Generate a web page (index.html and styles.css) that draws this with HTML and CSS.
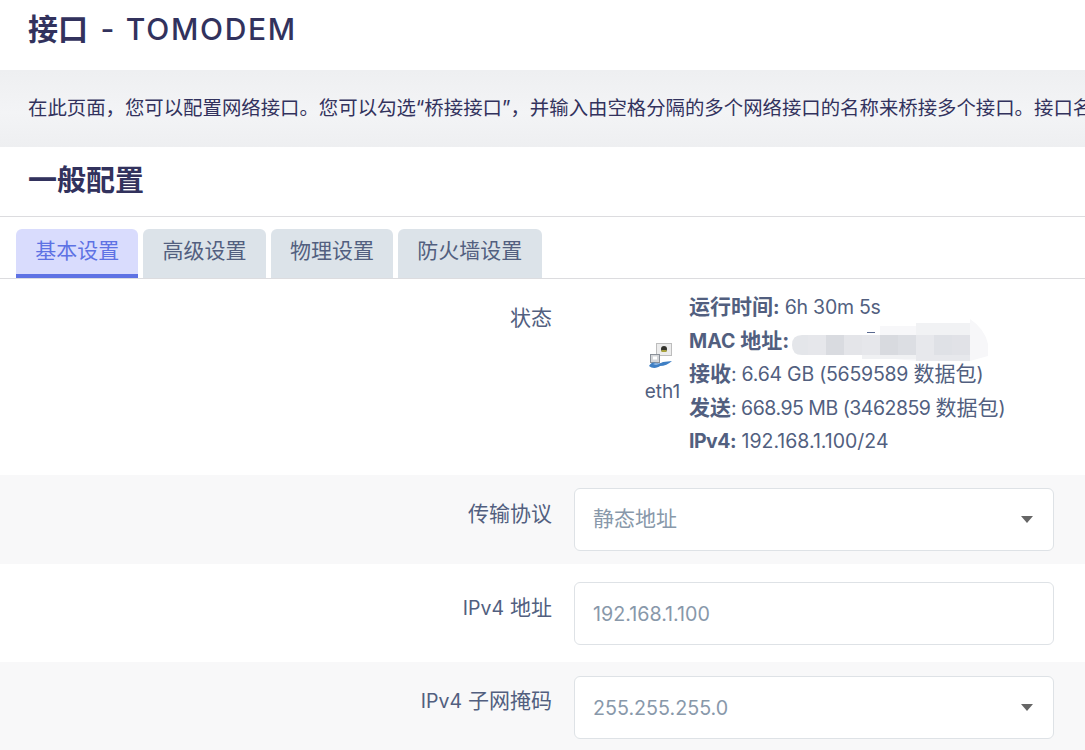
FILE: index.html
```html
<!DOCTYPE html>
<html lang="zh-CN">
<head>
    <meta charset="UTF-8">
    <meta name="viewport" content="width=device-width, initial-scale=1.0">
    <title>接口 - TOMODEM</title>
    <link rel="stylesheet" href="styles.css">
</head>
<body>
    <h1 class="page-title">接口 <span class="title-latin">- TOMODEM</span></h1>
    <div class="page-desc">在此页面，您可以配置网络接口。您可以勾选“桥接接口”，并输入由空格分隔的多个网络接口的名称来桥接多个接口。接口名称中可以使用 VLAN 表示法。</div>

    <main class="section">
        <h2 class="section-title">一般配置</h2>
        <ul class="tabs">
            <li class="tab active">基本设置</li>
            <li class="tab">高级设置</li>
            <li class="tab">物理设置</li>
            <li class="tab">防火墙设置</li>
        </ul>

        <div class="row row-status">
            <div class="row-label">状态</div>
            <div class="status">
                <div class="status-icon">
                    <svg width="26" height="28" viewBox="0 0 26 28">
                        <rect x="8.5" y="1.5" width="15" height="12" fill="#ececec" stroke="#bdbdbd"/>
                        <circle cx="16" cy="7" r="3" fill="#33332c"/>
                        <rect x="13.5" y="8" width="5" height="2" fill="#a9a23c"/>
                        <rect x="2.5" y="12.5" width="9" height="8" fill="#d4d6d9" stroke="#8b9199"/>
                        <rect x="5" y="14.5" width="4" height="3" fill="#fff"/>
                        <path d="M1 24c2-4 5-4 8-3 2 1 4 0 6-1l9-1c-3 3-8 5-12 5-2 2-8 3-11 0z" fill="#3f7fc4"/>
                        <path d="M5 22c2-1 4-1 6 0-2 1-4 1-6 0z" fill="#a9c8ea"/>
                    </svg>
                    <span>eth1</span>
                </div>
                <div class="status-info">
                    <div class="status-line"><strong>运行时间<span class="lat">:</span></strong><span class="lat tight"> 6h 30m 5s</span></div>
                    <div class="status-line mac-line"><strong><span class="lat">MAC</span> 地址:</strong>
                        <svg class="mac-blur" width="210" height="50" viewBox="0 0 210 50">
                            <path d="M95 21 95 12 131 12 131 9 185 9 185 5Q200 15 203 30L203 42 185 47 131 47 77 42Z" fill="#f7f7f9"/>
                            <rect x="131" y="9" width="54" height="12" fill="#f1f2f4"/>
                            <rect x="77" y="40" width="54" height="5" fill="#f0f1f3"/>
                            <rect x="131" y="40" width="54" height="7" fill="#e7e8ec"/>
                            <path d="M23 21H17Q7 21 7 31T17 41H23Z" fill="#e4e6ea"/>
                            <rect x="23" y="21" width="18" height="20" fill="#e6e7eb"/>
                            <rect x="41" y="21" width="18" height="20" fill="#d9dbe0"/>
                            <rect x="59" y="21" width="18" height="20" fill="#e4e5e9"/>
                            <rect x="77" y="21" width="18" height="20" fill="#e6e7eb"/>
                            <rect x="95" y="21" width="18" height="20" fill="#d8dadf"/>
                            <rect x="113" y="21" width="18" height="20" fill="#dcdee3"/>
                            <rect x="131" y="21" width="18" height="20" fill="#e7e8ec"/>
                            <rect x="149" y="21" width="18" height="20" fill="#dfe1e6"/>
                            <rect x="167" y="21" width="18" height="20" fill="#e1e2e7"/>
                            <rect x="82" y="18" width="8" height="1" fill="#5a6a90"/>
                        </svg>
                    </div>
                    <div class="status-line"><strong>接收</strong><span class="lat tight">: 6.64 GB (5659589 </span>数据包<span class="lat">)</span></div>
                    <div class="status-line"><strong>发送</strong><span class="lat tighter">: 668.95 MB (3462859 </span>数据包<span class="lat">)</span></div>
                    <div class="status-line"><strong class="lat tighter">IPv4:</strong><span class="lat"> 192.168.1.100/24</span></div>
                </div>
            </div>
        </div>

        <div class="row row-alt">
            <div class="row-label">传输协议</div>
            <div class="field select">静态地址</div>
        </div>
        <div class="row">
            <div class="row-label"><span class="lat">IPv4</span> 地址</div>
            <div class="field field-lat"><span class="lat">192.168.1.100</span></div>
        </div>
        <div class="row row-alt row-last">
            <div class="row-label"><span class="lat">IPv4</span> 子网掩码</div>
            <div class="field field-lat select"><span class="lat">255.255.255.0</span></div>
        </div>
    </main>
</body>
</html>
```

FILE: styles.css
```css
html, body {
    height: 100%;
    overflow: hidden;
}
body {
    margin: 0;
    background: #fff;
    color: #525f7f;
    font-family: "Inter", "Noto Sans CJK SC", sans-serif;
    font-size: 21px;
    line-height: 1.6;
}
/* latin text runs narrower than the cjk text beside it */
.lat {
    font-size: 19.5px;
}
.tight {
    letter-spacing: -0.25px;
}
.tighter {
    letter-spacing: -0.5px;
}
.page-title {
    margin: 0;
    height: 70px;
    padding: 5px 28px 0;
    box-sizing: border-box;
    color: #32325d;
    font-size: 30px;
    line-height: 48px;
    font-weight: 600;
}
.title-latin {
    margin-left: 5px;
    font-weight: 500;
    letter-spacing: 1.7px;
}
.page-desc {
    height: 77px;
    padding: 0 28px;
    box-sizing: border-box;
    background: linear-gradient(#eeeff1, #f3f4f6 55%, #eeeff1);
    color: #32325d;
    font-size: 19.4px;
    line-height: 77px;
    white-space: nowrap;
    overflow: hidden;
}
.section-title {
    margin: 0;
    height: 70px;
    padding: 0 28px;
    box-sizing: border-box;
    border-bottom: 1px solid #dcdcdf;
    color: #32325d;
    font-size: 29px;
    line-height: 68px;
    font-weight: 700;
}
.tabs {
    display: flex;
    gap: 5px;
    list-style: none;
    margin: 0;
    padding: 12px 16px 0;
    border-bottom: 1px solid #dcdcdf;
}
.tab {
    height: 49px;
    box-sizing: border-box;
    padding: 0 19.2px;
    border-radius: 6px 6px 0 0;
    background: #dce3e9;
    line-height: 44px;
    color: #525f7f;
}
.tab.active {
    background: #d9dcfd;
    color: #5e72e4;
    border-bottom: 4px solid #5e72e4;
}
.row {
    display: flex;
    padding: 18px 31px 17px 0;
}
.row-alt {
    background: #f8f8f9;
    padding: 13px 31px 13px 0;
}
.row-last {
    padding-top: 14px;
}
.row-label {
    width: 552px;
    flex: none;
    text-align: right;
    line-height: 52px;
}
.row-last .row-label {
    line-height: 50px;
}
.field {
    position: relative;
    flex: 1;
    height: 63px;
    margin-left: 22px;
    padding: 0 18px;
    box-sizing: border-box;
    border: 1px solid #dee2e6;
    border-radius: 6px;
    background: #fff;
    color: #8898aa;
    line-height: 60px;
}
.field-lat {
    line-height: 61px;
}
.field-lat .lat {
    font-size: 19.7px;
}
.select::after {
    content: "";
    position: absolute;
    right: 20px;
    top: 27px;
    border-style: solid;
    border-width: 7px 6px 0;
    border-color: #666 transparent transparent;
}
.row-status {
    padding: 11px 0 17.5px;
}
.row-status .row-label {
    line-height: 56px;
}
.status {
    display: flex;
    align-items: center;
    margin-left: 88px;
}
.status-icon {
    display: flex;
    flex-direction: column;
    align-items: center;
    width: 45px;
    padding-right: 4px;
    font-size: 19px;
    line-height: 28px;
}
.status-icon svg {
    margin: 0 4px 8px 0;
    filter: blur(0.4px);
}
.status-line {
    height: 33.5px;
    line-height: 33.5px;
    white-space: pre;
}
.status-info strong {
    font-weight: 700;
}
.mac-line {
    position: relative;
}
.mac-blur {
    position: absolute;
    left: 96px;
    top: -10px;
    filter: blur(0.7px);
}
```
